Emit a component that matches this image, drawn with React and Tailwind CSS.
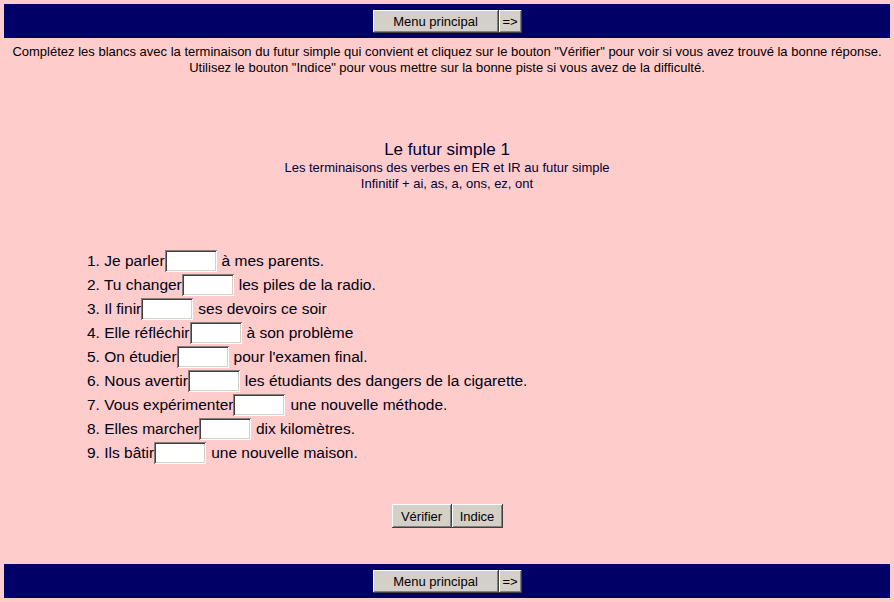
import { useState } from 'react';

const btn =
  "bg-[#d4d0c8] text-[13px] text-black leading-none flex items-center justify-center shadow-[inset_-1px_-1px_#404040,inset_1px_1px_#ffffff,inset_-2px_-2px_#808080,inset_2px_2px_#d4d0c8]";

const items = [
  ['1. Je parler', 'à mes parents.'],
  ['2. Tu changer', 'les piles de la radio.'],
  ['3. Il finir', 'ses devoirs ce soir'],
  ['4. Elle réfléchir', 'à son problème'],
  ['5. On étudier', "pour l'examen final."],
  ['6. Nous avertir', 'les étudiants des dangers de la cigarette.'],
  ['7. Vous expérimenter', 'une nouvelle méthode.'],
  ['8. Elles marcher', 'dix kilomètres.'],
  ['9. Ils bâtir', 'une nouvelle maison.'],
];

function NavBar() {
  return (
    <div className="h-[34px] bg-[#000066] flex items-center justify-center">
      <div className="flex">
        <button className={btn + " w-[126px] h-[23px]"}>Menu principal</button>
        <button className={btn + " w-[23px] h-[23px]"}>=&gt;</button>
      </div>
    </div>
  );
}

export default function App() {
  const [answers, setAnswers] = useState(items.map(() => ''));

  return (
    <div className="w-[894px] h-[602px] bg-[#ffcccc] p-1 flex flex-col font-['Liberation_Sans',Arial,sans-serif]">
      <NavBar />

      {/* Consigne */}
      <div className="mt-[6px] text-center text-[13px] leading-[16px] text-black">
        <p>Complétez les blancs avec la terminaison du futur simple qui convient et cliquez sur le bouton "Vérifier" pour voir si vous avez trouvé la bonne réponse.</p>
        <p>Utilisez le bouton "Indice" pour vous mettre sur la bonne piste si vous avez de la difficulté.</p>
      </div>

      {/* Titre */}
      <div className="mt-[64px] text-center text-[#000033]">
        <h1 className="text-[17px] leading-[20px]">Le futur simple 1</h1>
        <p className="text-[13px] leading-[16px]">Les terminaisons des verbes en ER et IR au futur simple</p>
        <p className="text-[13px] leading-[16px]">Infinitif + ai, as, a, ons, ez, ont</p>
      </div>

      {/* Exercice */}
      <div className="mt-[57px] ml-[83px] text-[15.5px] text-[#000011]">
        {items.map(([before, after], i) => (
          <div key={i} className="h-[24px] flex items-center">
            <span>{before}</span>
            <input
              value={answers[i]}
              onChange={(e) => {
                const next = [...answers];
                next[i] = e.target.value;
                setAnswers(next);
              }}
              className="w-[52px] h-[22px] bg-white px-1 text-[13px] outline-none shadow-[inset_1px_1px_#808080,inset_-1px_-1px_#ffffff,inset_2px_2px_#404040,inset_-2px_-2px_#d4d0c8]"
            />
            <span className="ml-[5px]">{after}</span>
          </div>
        ))}
      </div>

      <div className="mt-[39px] flex justify-center">
        <button className={btn + " w-[60px] h-[24px] text-[#000033]"}>Vérifier</button>
        <button className={btn + " w-[51px] h-[24px] text-[#000033]"}>Indice</button>
      </div>

      <div className="mt-auto">
        <NavBar />
      </div>
    </div>
  );
}
